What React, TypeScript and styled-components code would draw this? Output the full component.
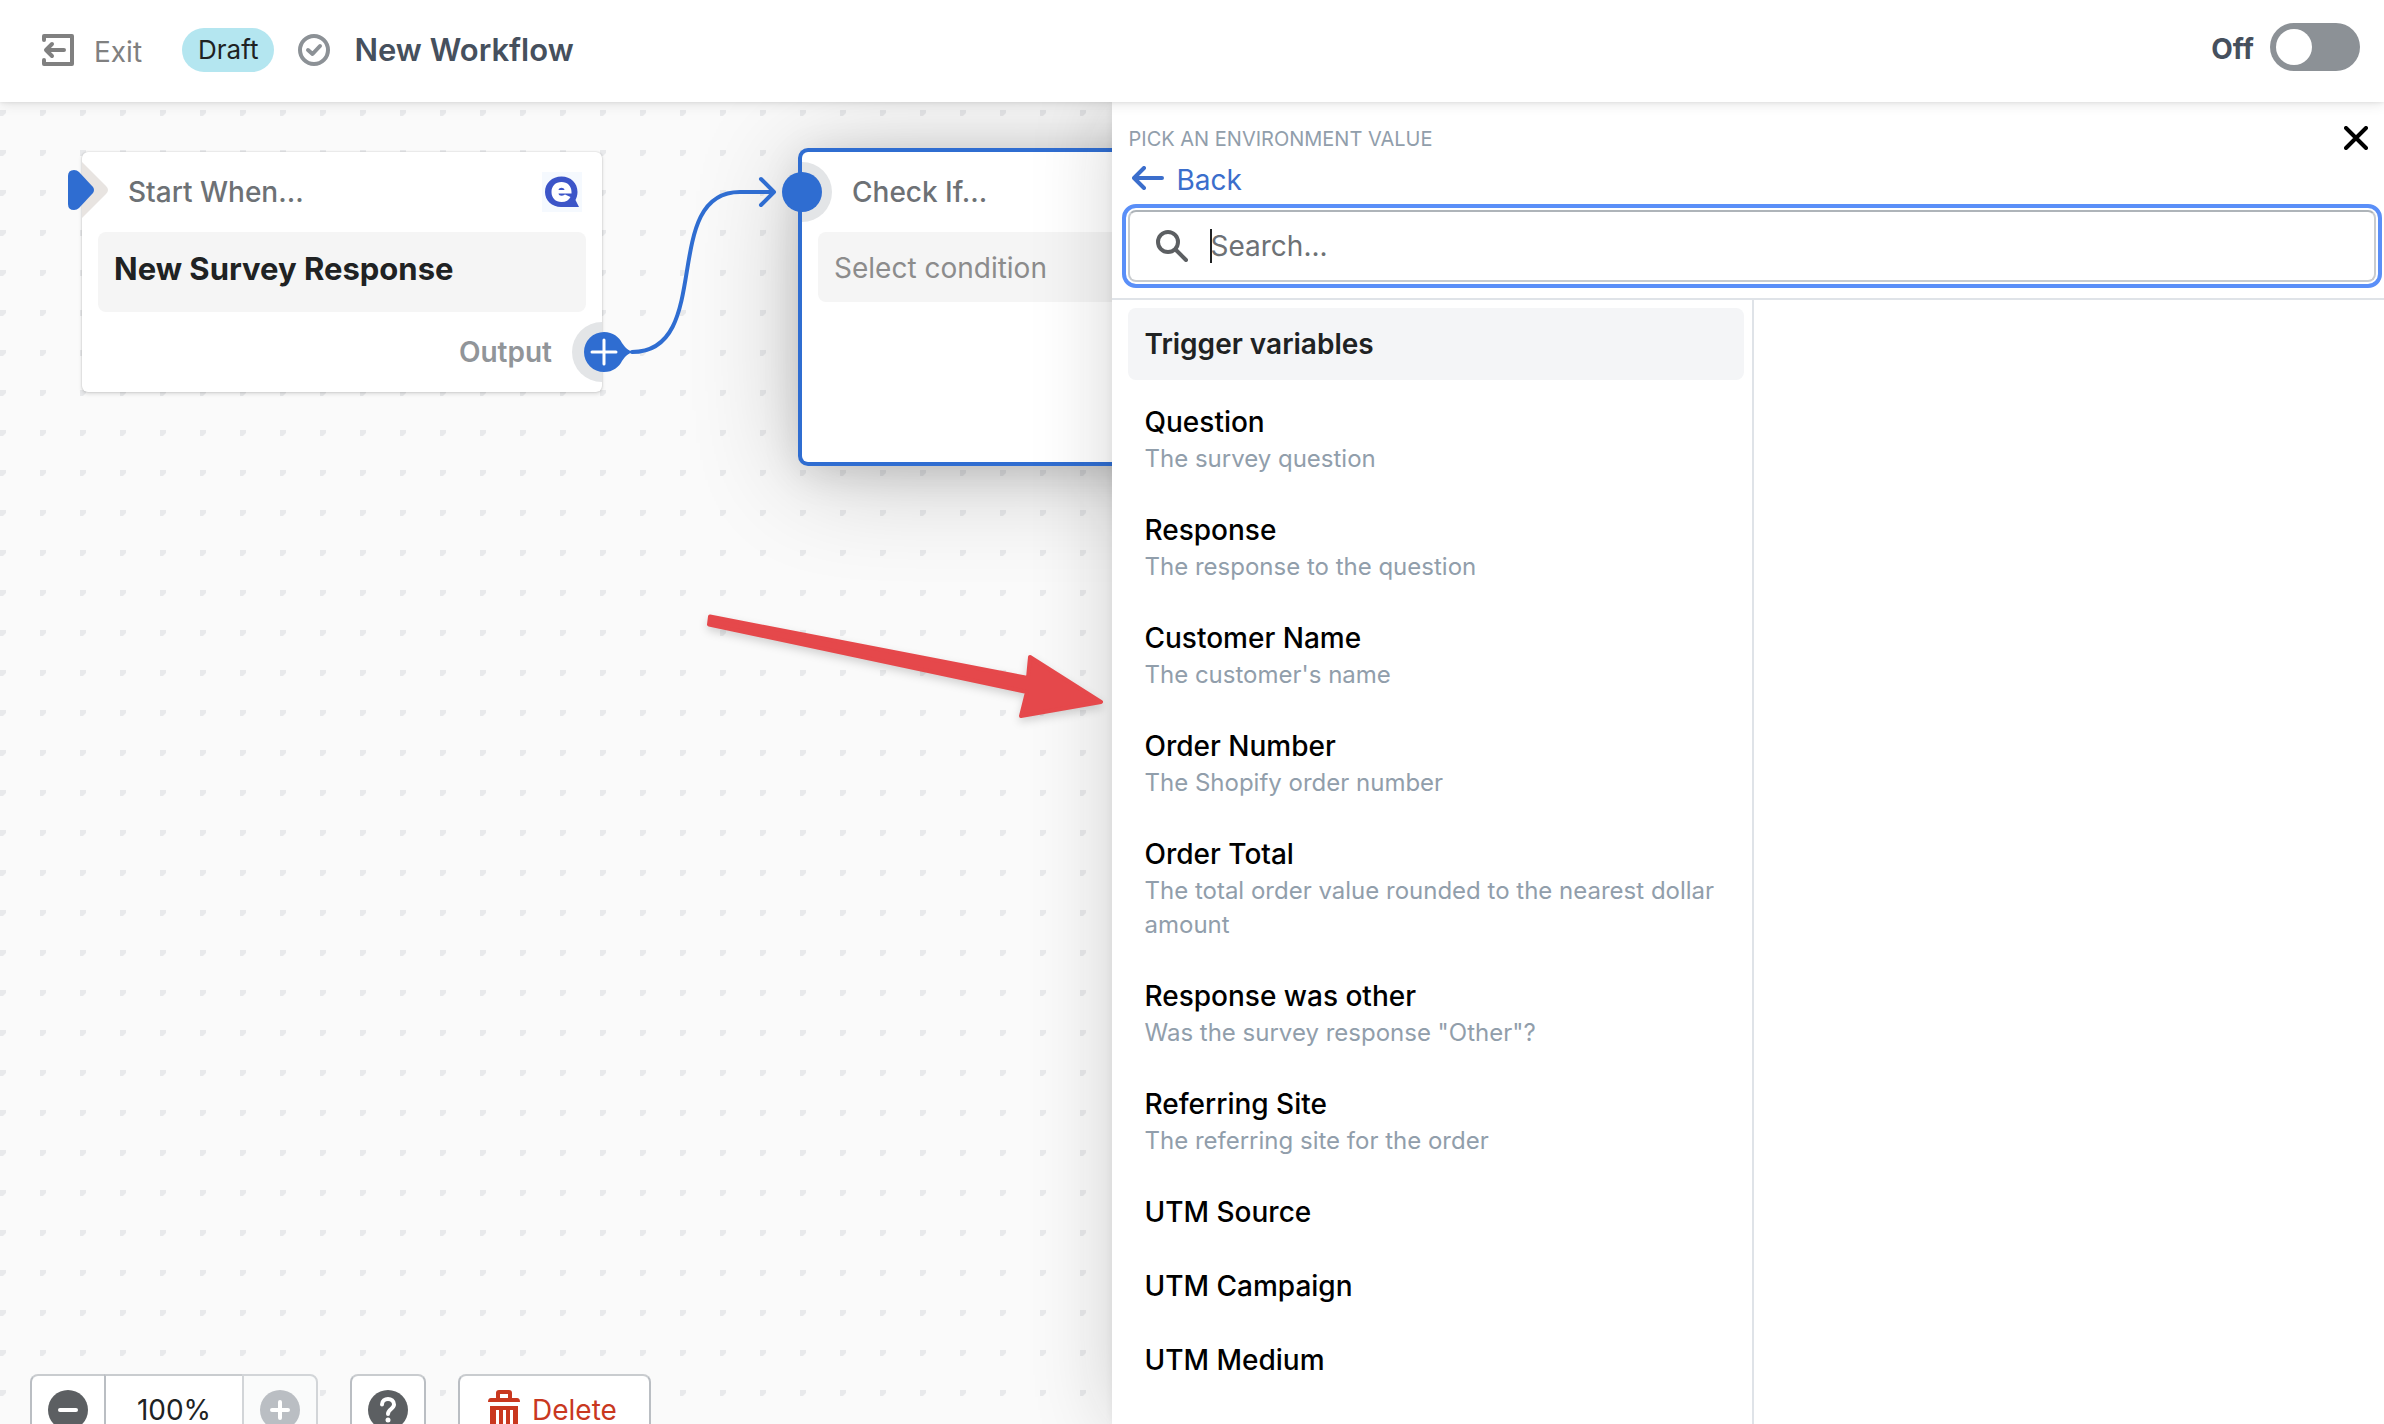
import React, { useState } from "react";
import styled, { createGlobalStyle, css } from "styled-components";

const blue = "#2f6dd1";

const GlobalStyle = createGlobalStyle`
  *, *::before, *::after { box-sizing: border-box; }
  html, body, #root { height: 100%; }
  body {
    margin: 0;
    overflow: hidden;
    font-family: Inter, "Liberation Sans", sans-serif;
    font-size: 28px;
    line-height: 40px;
    color: #202223;
    background: #fff;
  }
  button, input { font: inherit; color: inherit; }
  button { cursor: pointer; }
`;

const Page = styled.div`
  display: flex;
  flex-direction: column;
  height: 100vh;
`;

const Header = styled.header`
  position: relative;
  z-index: 3;
  display: flex;
  align-items: center;
  justify-content: space-between;
  height: 102px;
  padding: 0 24px 2px 40px;
  background: #fff;
  box-shadow: 0 0 4px rgba(0, 0, 0, 0.1), 0 2px 12px rgba(0, 0, 0, 0.1);
`;

const HeaderGroup = styled.div`
  display: flex;
  align-items: center;
  gap: 24px;
`;

const ExitButton = styled.button`
  display: flex;
  align-items: center;
  gap: 18px;
  margin-right: 16px;
  padding: 0;
  border: 0;
  background: none;
  color: #808080;
`;

const ExitText = styled.span`
  padding-top: 4px;
`;

const Badge = styled.span`
  padding: 2px 16px;
  border-radius: 22px;
  background: #b4e6f0;
  font-size: 26px;
`;

const WorkflowTitle = styled.h1`
  margin: 0;
  font-size: 31px;
  font-weight: 600;
  color: #46505d;
`;

const SwitchLabel = styled.label`
  display: flex;
  align-items: center;
  gap: 16px;
  padding-bottom: 6px;
  font-weight: 700;
  color: #46505d;
`;

const SwitchText = styled.span`
  padding-top: 4px;
`;

const Switch = styled.input`
  appearance: none;
  display: flex;
  align-items: center;
  width: 90px;
  height: 48px;
  margin: 0;
  padding: 6px;
  border-radius: 24px;
  background: #8c9196;
  &::before {
    content: "";
    width: 36px;
    height: 36px;
    border-radius: 50%;
    background: #fff;
  }
  &:checked { justify-content: flex-end; background: ${blue}; }
`;

const Workspace = styled.main`
  position: relative;
  flex: 1;
  min-height: 0;
  display: flex;
  justify-content: flex-end;
  overflow: hidden;
  background-color: #fafafa;
`;

const Canvas = styled.section`
  position: absolute;
  inset: 0;
  overflow: hidden;
`;

const CanvasLayer = styled.svg`
  position: absolute;
  top: 0;
  left: 0;
  width: 100%;
  height: 100%;
  pointer-events: none;
`;

const Node = styled.article<{ $x: number; $y: number; $active?: boolean }>`
  position: absolute;
  left: ${(p) => p.$x}px;
  top: ${(p) => p.$y}px;
  width: 520px;
  min-height: ${(p) => (p.$active ? 310 : 240)}px;
  padding: 20px 16px 16px;
  border-radius: 6px;
  background: #fff;
  box-shadow: ${(p) =>
    p.$active
      ? `0 0 0 4px ${blue}, 0 8px 40px rgba(0, 0, 0, 0.14), 0 10px 110px rgba(0, 0, 0, 0.24)`
      : "0 0 2px rgba(0, 0, 0, 0.2), 0 2px 4px rgba(0, 0, 0, 0.12)"};
`;

const NodeHeader = styled.div`
  display: flex;
  align-items: center;
  justify-content: space-between;
  height: 40px;
  margin-bottom: 20px;
  padding: 0 4px 0 30px;
  font-weight: 500;
  color: #6d7175;
`;

const NodeHeaderActive = styled(NodeHeader)`
  padding-left: 34px;
`;

const NodeField = styled.button<{ $filled?: boolean }>`
  display: block;
  width: 100%;
  padding: 16px 16px 14px;
  height: ${(p) => (p.$filled ? 80 : 70)}px;
  border: 0;
  border-radius: 8px;
  background: #f5f5f5;
  text-align: left;
  ${(p) =>
    p.$filled
      ? css`
          padding-bottom: 22px;
          font-size: 31px;
          font-weight: 700;
        `
      : css`
          color: #8c8c8c;
        `}
`;

const NodeOutput = styled.div`
  padding: 20px 34px 0;
  text-align: right;
  font-weight: 600;
  color: #919599;
`;

const Toolbar = styled.div`
  position: absolute;
  left: 30px;
  bottom: -22px;
  display: flex;
  gap: 32px;
  line-height: 28px;
`;

const ButtonGroup = styled.div`
  display: flex;
`;

const ToolButton = styled.button<{ $tone?: "critical" }>`
  display: flex;
  align-items: center;
  justify-content: center;
  gap: 12px;
  min-width: 76px;
  height: 72px;
  padding: 0 ${(p) => (p.$tone ? 32 : 16)}px 0 ${(p) => (p.$tone ? 28 : 16)}px;
  border: 2px solid #babec3;
  border-top-color: #c9cccf;
  border-radius: 8px;
  background: #fff;
  color: ${(p) => (p.$tone === "critical" ? "#c9381f" : "#202223")};
  ${ButtonGroup} > & { border-radius: 0; margin-left: -2px; }
  ${ButtonGroup} > &:first-child { border-radius: 8px 0 0 8px; margin-left: 0; }
  ${ButtonGroup} > &:last-child { border-radius: 0 8px 8px 0; }
  &:disabled { border-color: #d2d5d8; background: #fafbfb; }
`;

const ZoomValue = styled(ToolButton)`
  width: 140px;
`;

const Panel = styled.aside`
  position: relative;
  z-index: 2;
  display: flex;
  flex-direction: column;
  width: calc(53% + 8px);
  background: #fff;
  box-shadow: 0 0 8px rgba(23, 24, 24, 0.06), 0 0 76px rgba(23, 24, 24, 0.18);
`;

const PanelTop = styled.div`
  padding: 20px 8px 16px 16px;
  border-bottom: 2px solid #dfe3e8;
`;

const PanelTitleRow = styled.div`
  display: flex;
  align-items: center;
  justify-content: space-between;
  height: 32px;
  padding-right: 4px;
`;

const PanelTitle = styled.h2`
  margin: 0;
  padding-top: 2px;
  font-size: 20px;
  line-height: 32px;
  font-weight: 400;
  text-transform: uppercase;
  color: #919eab;
`;

const CloseButton = styled.button`
  display: flex;
  padding: 4px;
  border: 0;
  background: none;
`;

const BackLink = styled.a`
  display: inline-flex;
  align-items: center;
  gap: 12px;
  height: 48px;
  padding-left: 4px;
  color: #3b6ecc;
  text-decoration: none;
`;

const BackText = styled.span`
  padding-top: 4px;
`;

const SearchBox = styled.label`
  display: flex;
  align-items: center;
  gap: 22px;
  height: 72px;
  margin-top: 8px;
  padding: 0 26px;
  border: 2px solid #c9cccf;
  border-top-color: #aeb4b9;
  border-radius: 8px;
  outline: 4px solid #5a8ff8;
  outline-offset: 2px;
`;

const SearchInput = styled.input`
  flex: 1;
  min-width: 0;
  padding: 0;
  border: 0;
  outline: 0;
  background: none;
  &::placeholder { color: #6d7175; opacity: 1; }
`;

const Caret = styled.span`
  width: 2px;
  height: 34px;
  margin-right: -24px;
  background: #202223;
`;

const PanelBody = styled.div`
  flex: 1;
  display: flex;
  min-height: 0;
`;

const OptionColumn = styled.div`
  width: 642px;
  padding: 8px;
  padding-left: 16px;
  border-right: 2px solid #dfe3e8;
  overflow: hidden;
`;

const GroupHeading = styled.h3`
  margin: 0 0 6px;
  padding: 16px;
  border-radius: 8px;
  background: #f4f5f7;
  font-size: 28px;
  font-weight: 600;
`;

const OptionList = styled.ul`
  display: flex;
  flex-direction: column;
  gap: 2px;
  margin: 0;
  padding: 0;
  list-style: none;
`;

const OptionButton = styled.button`
  display: flex;
  flex-direction: column;
  width: 100%;
  padding: 16px;
  border: 0;
  background: none;
  text-align: left;
`;

const OptionName = styled.span`
  font-weight: 500;
  color: #000;
`;

const OptionNote = styled.span`
  font-size: 24px;
  line-height: 34px;
  color: #919eab;
`;

const options: { name: string; note?: string }[] = [
  { name: "Question", note: "The survey question" },
  { name: "Response", note: "The response to the question" },
  { name: "Customer Name", note: "The customer's name" },
  { name: "Order Number", note: "The Shopify order number" },
  { name: "Order Total", note: "The total order value rounded to the nearest dollar amount" },
  { name: "Response was other", note: 'Was the survey response "Other"?' },
  { name: "Referring Site", note: "The referring site for the order" },
  { name: "UTM Source" },
  { name: "UTM Campaign" },
  { name: "UTM Medium" },
];

const ExitIcon = () => (
  <svg width="36" height="36" viewBox="0 0 36 36" fill="none" stroke="#808080" strokeWidth="4" strokeLinecap="round" strokeLinejoin="round">
    <path d="M4 8V4H32V32H4V28" />
    <path d="M24 18H7M12 12L6 18L12 24" />
  </svg>
);

const CheckIcon = () => (
  <svg width="32" height="32" viewBox="0 0 32 32" fill="none" stroke="#8c9196" strokeLinecap="round" strokeLinejoin="round">
    <circle cx="16" cy="16" r="14" strokeWidth="4" />
    <path d="M10 16L14.500 20L22 12" strokeWidth="4" />
  </svg>
);

const CloseIcon = () => (
  <svg width="24" height="24" viewBox="0 0 24 24" stroke="#000" strokeWidth="4" strokeLinecap="round">
    <path d="M2 2L22 22M22 2L2 22" />
  </svg>
);

const BackIcon = () => (
  <svg width="32" height="24" viewBox="0 0 32 24" fill="none" stroke="#3b6ecc" strokeWidth="4" strokeLinecap="round" strokeLinejoin="round">
    <path d="M30 12H3M12 2L2 12L12 22" />
  </svg>
);

const SearchIcon = () => (
  <svg width="32" height="32" viewBox="0 0 32 32" fill="none" stroke="#5c5f62" strokeWidth="4" strokeLinecap="round">
    <circle cx="12" cy="12" r="10" />
    <path d="M20 20L30 30" />
  </svg>
);

const BrandIcon = () => (
  <svg width="40" height="40" viewBox="0 0 40 40">
    <rect width="40" height="40" fill="#f5f9fe" />
    <path d="M19.500 4.500C29 4.500 35.500 11 35.500 20C35.500 23 34.500 26 33.500 28L37 35H19C10 35 3 28.500 3 20C3 11 10 4.500 19.500 4.500Z" fill="#3c55c8" />
    <path d="M19.500 10C25.500 10 29.500 14 29.500 20V21.500H16.500C17 24 20 24.500 23 22.500L28.500 25C27 28 24 30 19.500 30C13.500 30 9.500 26 9.500 20C9.500 14 13.500 10 19.500 10Z" fill="#fff" />
    <path d="M16.500 18C17 15 22 15 22.500 18Z" fill="#3c55c8" />
  </svg>
);

const MinusIcon = () => (
  <svg width="40" height="40" viewBox="0 0 40 40">
    <circle cx="20" cy="20" r="20" fill="#5c5f62" />
    <path d="M12 20H28" stroke="#fff" strokeWidth="4" strokeLinecap="round" />
  </svg>
);

const PlusIcon = () => (
  <svg width="40" height="40" viewBox="0 0 40 40">
    <circle cx="20" cy="20" r="20" fill="#babec3" />
    <path d="M12 20H28M20 12V28" stroke="#fff" strokeWidth="4" strokeLinecap="round" />
  </svg>
);

const HelpIcon = () => (
  <svg width="40" height="40" viewBox="0 0 40 40">
    <circle cx="20" cy="20" r="20" fill="#5c5f62" />
    <path d="M14 14.500C14 7 26 7 26 14.500C26 19 20 19 20 24" fill="none" stroke="#fff" strokeWidth="4" strokeLinecap="round" />
    <circle cx="20" cy="30" r="2.500" fill="#fff" />
  </svg>
);

const TrashIcon = () => (
  <svg width="32" height="40" viewBox="0 0 32 40" fill="#c9381f">
    <path fillRule="evenodd" d="M8 8V3Q8 0 11 0H21Q24 0 24 3V8H29Q32 8 32 12H0Q0 8 3 8ZM12 4V8H20V4Z" />
    <path fillRule="evenodd" d="M2 16H30V37Q30 40 27 40H5Q2 40 2 37ZM8 20V36H11V20ZM15 20V36H18V20ZM22 20V36H25V20Z" />
  </svg>
);

const DotGrid = () => (
  <CanvasLayer aria-hidden="true">
    <defs>
      <pattern id="dots" width="40" height="40" patternUnits="userSpaceOnUse" y="8">
        <path d="M0 0H6V3L3 6H0Z" fill="#e8e9eb" />
      </pattern>
    </defs>
    <rect width="100%" height="100%" fill="url(#dots)" />
  </CanvasLayer>
);

const Connections = () => (
  <CanvasLayer aria-hidden="true">
    <path d="M82 60L106 84Q110 88 106 92L82 116Z" fill="#e8e4e1" />
    <path d="M68 74Q68 68 74 68Q77 68 79 70L93 85Q95 88 93 91L79 106Q77 108 74 108Q68 108 68 102Z" fill={blue} />
    <path d="M602 220A30 30 0 0 0 602 280Z" fill="#e3e5e7" />
    <path d="M604 230C613 230 619 235 622 241C626 247 630 250 636 250C630 250 626 253 622 259C619 265 613 270 604 270A20 20 0 0 1 604 230Z" fill={blue} />
    <path d="M592 250H616M604 238V262" stroke="#fff" strokeWidth="3" strokeLinecap="round" />
    <path d="M802 60A30 30 0 0 1 802 120Z" fill="#e3e5e7" />
    <circle cx="802" cy="90" r="20" fill={blue} />
    <g fill="none" stroke={blue} strokeWidth="4" strokeLinecap="round" strokeLinejoin="round">
      <path d="M632 250C715 250 659 90 740 90H772" />
      <path d="M761 77L774 90L761 103" />
    </g>
  </CanvasLayer>
);

const PointerArrow = styled(CanvasLayer)`
  z-index: 4;
  filter: drop-shadow(0 4px 4px rgba(0, 0, 0, 0.16));
`;

export default function App() {
  const [on, setOn] = useState(false);
  const [query, setQuery] = useState("");

  return (
    <Page>
      <GlobalStyle />
      <Header>
        <HeaderGroup>
          <ExitButton type="button">
            <ExitIcon />
            <ExitText>Exit</ExitText>
          </ExitButton>
          <Badge>Draft</Badge>
          <CheckIcon />
          <WorkflowTitle>New Workflow</WorkflowTitle>
        </HeaderGroup>
        <SwitchLabel>
          <SwitchText>{on ? "On" : "Off"}</SwitchText>
          <Switch type="checkbox" role="switch" checked={on} onChange={(e) => setOn(e.target.checked)} />
        </SwitchLabel>
      </Header>
      <Workspace>
        <Canvas>
          <DotGrid />
          <Node $x={802} $y={50} $active>
            <NodeHeaderActive>Check If...</NodeHeaderActive>
            <NodeField type="button">Select condition</NodeField>
          </Node>
          <Node $x={82} $y={50}>
            <NodeHeader>
              Start When...
              <BrandIcon />
            </NodeHeader>
            <NodeField type="button" $filled>New Survey Response</NodeField>
            <NodeOutput>Output</NodeOutput>
          </Node>
          <Connections />
          <Toolbar>
            <ButtonGroup>
              <ToolButton type="button" aria-label="Zoom out"><MinusIcon /></ToolButton>
              <ZoomValue type="button">100%</ZoomValue>
              <ToolButton type="button" aria-label="Zoom in" disabled><PlusIcon /></ToolButton>
            </ButtonGroup>
            <ToolButton type="button" aria-label="Help"><HelpIcon /></ToolButton>
            <ToolButton type="button" $tone="critical"><TrashIcon />Delete</ToolButton>
          </Toolbar>
        </Canvas>
        <Panel>
          <PanelTop>
            <PanelTitleRow>
              <PanelTitle>Pick an environment value</PanelTitle>
              <CloseButton type="button" aria-label="Close"><CloseIcon /></CloseButton>
            </PanelTitleRow>
            <BackLink href="#back">
              <BackIcon />
              <BackText>Back</BackText>
            </BackLink>
            <SearchBox>
              <SearchIcon />
              <Caret />
              <SearchInput
                type="text"
                aria-label="Search"
                placeholder="Search..."
                value={query}
                onChange={(e) => setQuery(e.target.value)}
              />
            </SearchBox>
          </PanelTop>
          <PanelBody>
            <OptionColumn>
              <GroupHeading>Trigger variables</GroupHeading>
              <OptionList>
                {options.map((o) => (
                  <li key={o.name}>
                    <OptionButton type="button">
                      <OptionName>{o.name}</OptionName>
                      {o.note && <OptionNote>{o.note}</OptionNote>}
                    </OptionButton>
                  </li>
                ))}
              </OptionList>
            </OptionColumn>
          </PanelBody>
        </Panel>
        <PointerArrow aria-hidden="true">
          <path
            d="M710 514.500L1028 576L1030 555L1101 600L1021 614L1027 590L709 522.500Z"
            fill="#e5484b"
            stroke="#e5484b"
            strokeWidth="4"
            strokeLinejoin="round"
          />
        </PointerArrow>
      </Workspace>
    </Page>
  );
}
